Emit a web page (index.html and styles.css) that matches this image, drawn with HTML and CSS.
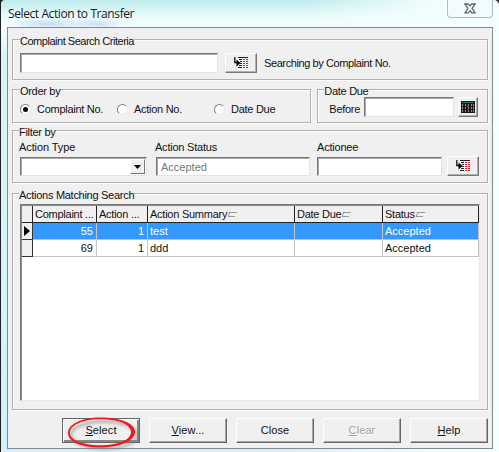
FILE: index.html
```html
<!DOCTYPE html>
<html lang="en">
<head>
<meta charset="utf-8">
<title>Select Action to Transfer</title>
<link rel="stylesheet" href="styles.css">
</head>
<body>
<svg class="defs" width="0" height="0">
  <defs>
    <symbol id="pick" viewBox="0 0 14 12">
      <path d="M4 .5h10M5 2.500h3M6 4.500h2M6 6.500h2M5 8.500h3M4 10.500h4" stroke="#222" stroke-width="1"/>
      <path d="M9 2.500h2M12 2.500h2M9 4.500h2M12 4.500h2M9 6.500h2M12 6.500h2M9 8.500h2M12 8.500h2M9 10.500h2M12 10.500h2" stroke="#e0202a" stroke-width="1.200"/>
      <path d="M.8 0v5.500H3" fill="none" stroke="#111" stroke-width="1.300"/>
      <path d="M2.500 2.500L6.500 6L2.500 9.500z" fill="#000"/>
    </symbol>
  </defs>
</svg>
<div class="window">
  <header class="titlebar">
    <h1 class="title">Select Action to Transfer</h1>
    <button class="close" aria-label="Close">
      <svg width="12" height="11" viewBox="0 0 12 11"><path d="M1 1h3.300L6 2.900L7.700 1H11L8.100 5.300L11 9.800H7.700L6 7.700L4.300 9.800H1L3.900 5.300z" fill="#fff" stroke="#5d6070" stroke-width="1.300"/></svg>
    </button>
  </header>
  <main class="client">
    <section class="group search">
      <h2 class="legend">Complaint Search Criteria</h2>
      <div class="search-row">
        <div class="field search-field"></div>
        <button class="tool"><svg width="14" height="12"><use href="#pick"/></svg></button>
        <span class="hint">Searching by Complaint No.</span>
      </div>
    </section>
    <div class="pair">
      <section class="group order">
        <h2 class="legend">Order by</h2>
        <div class="radios">
          <label class="option complaint"><i class="radio on"></i><span>Complaint No.</span></label>
          <label class="option action"><i class="radio"></i><span>Action No.</span></label>
          <label class="option"><i class="radio"></i><span>Date Due</span></label>
        </div>
      </section>
      <section class="group due">
        <h2 class="legend">Date Due</h2>
        <div class="due-row">
          <span class="before">Before</span>
          <div class="field due-field"></div>
          <button class="tool calendar">
            <svg width="14" height="12" viewBox="0 0 14 12"><path d="M0 0h14v12H0z" fill="#161616"/><path d="M1 1.500h12" stroke="#2b7476"/><path d="M1.500 3v8M4.500 3v8M7.500 3v8M10.500 3v8M12.500 3v8" stroke="#929292" stroke-dasharray="2 1"/><path d="M6 4h2v2H6z" fill="#c82030"/></svg>
          </button>
        </div>
      </section>
    </div>
    <section class="group filter">
      <h2 class="legend">Filter by</h2>
      <div class="filters">
        <div class="col type"><span class="t-type">Action Type</span><div class="field"><button class="drop"><svg width="7" height="4"><path d="M0 0h7L3.500 4z" fill="#000"/></svg></button></div></div>
        <div class="col status"><span class="t-status">Action Status</span><div class="field disabled">Accepted</div></div>
        <div class="col actionee"><span class="t-actionee">Actionee</span><div class="field"></div></div>
        <button class="tool"><svg width="14" height="12"><use href="#pick"/></svg></button>
      </div>
    </section>
    <section class="group results">
      <h2 class="legend">Actions Matching Search</h2>
      <div class="grid">
        <div class="row head">
          <div></div><div>Complaint ...</div><div>Action ...</div>
          <div>Action Summary<svg class="sort" width="9" height="7"><path d="M1 1.500h8M0 5.500h7M2 1L0 6" stroke="#999" fill="none"/></svg></div>
          <div>Date Due<svg class="sort" width="9" height="7"><path d="M1 1.500h8M0 5.500h7M2 1L0 6" stroke="#999" fill="none"/></svg></div>
          <div>Status<svg class="sort" width="9" height="7"><path d="M1 1.500h8M0 5.500h7M2 1L0 6" stroke="#999" fill="none"/></svg></div>
        </div>
        <div class="row selected">
          <div class="marker"><svg width="6" height="10"><path d="M0 0L6 5L0 10z" fill="#000"/></svg></div><div class="num">55</div><div class="num">1</div><div>test</div><div></div><div>Accepted</div>
        </div>
        <div class="row">
          <div class="marker"></div><div class="num">69</div><div class="num">1</div><div>ddd</div><div></div><div>Accepted</div>
        </div>
      </div>
    </section>
    <footer class="actions">
      <button class="btn default"><span><u>S</u>elect</span>
        <svg class="ring" width="78" height="40" viewBox="0 0 78 40">
          <defs><filter id="soft" x="-20%" y="-30%" width="140%" height="160%"><feGaussianBlur stdDeviation="1.4"/></filter></defs>
          <ellipse cx="40" cy="21" rx="33" ry="13.5" fill="none" stroke="#777" stroke-opacity=".5" stroke-width="3" filter="url(#soft)"/>
          <path fill-rule="evenodd" fill="#f01818" d="M4 19C4 10 18 3.500 36 3.500C56 3.500 71 9 71 18C71 27 56 33.500 36 33.500C18 33.500 4 28 4 19zM5.800 19C5.800 26 19 31.300 36 31.300C54 31.300 67 26 67 18C67 10 54 5.200 36 5.200C19 5.200 5.800 11 5.800 19z"/>
        </svg>
      </button>
      <button class="btn"><span><u>V</u>iew...</span></button>
      <button class="btn"><span>Close</span></button>
      <button class="btn off"><span><u>C</u>lear</span></button>
      <button class="btn"><span><u>H</u>elp</span></button>
    </footer>
  </main>
</div>
</body>
</html>
```

FILE: styles.css
```css
* { box-sizing: border-box; }
body { margin: 0; width: 499px; height: 452px; overflow: hidden; background: #222; }
.defs { display: block; }
h1, h2 { margin: 0; font-weight: normal; }
button { margin: 0; padding: 0; font: inherit; color: inherit; border-radius: 0; }
svg { display: block; flex: none; }
.window {
  width: 498px; height: 452px; margin-left: 1px; padding: 0 6px 3px 6px;
  border-radius: 4px 5px 0 0;
  background: radial-gradient(ellipse 40px 6px at 48px 24px, #c5dcf1, transparent), radial-gradient(ellipse 28px 6px at 96px 24px, #cce0f2, transparent), linear-gradient(90deg, transparent 60%, #f3feff 88%), linear-gradient(#bdebec, #e9fbfb 16px, #f3feff 27px, #d9f3f8 60px, #d4f1fb);
  font-family: "Liberation Sans", Arial, sans-serif; font-size: 11px; line-height: 13px; color: #111;
}
.titlebar { height: 27px; display: flex; justify-content: space-between; align-items: flex-start; }
.title { margin: 6px 0 0 1px; font: 12px/15px "Open Sans", "Noto Sans", sans-serif; letter-spacing: -.4px; color: #181818; }
.close {
  width: 46px; height: 18px; border: 1px solid #adbdc7; border-top: 0;
  border-radius: 0 0 4px 4px; background: #f2fcfe; display: flex; justify-content: center; padding-top: 3px;
}
.client {
  height: 422px; border: 1px solid #85898c; background: #f0f0f0; padding: 11px 4px 0 4px;
  display: flex; flex-direction: column;
}
.group { border: 1px solid #b1b1b1; box-shadow: 1px 1px 0 #fcfcfc, inset 1px 1px 0 #fcfcfc; padding-left: 7px; }
.legend { width: max-content; height: 13px; margin-top: -5px; background: #f0f0f0; font-size: 11px; line-height: 13px; white-space: nowrap; }
.field { height: 19px; background: #fff; border: 1px solid; border-color: #777 #e4e4e4 #e4e4e4 #777; box-shadow: inset 1px 1px 0 #aaa; }
.tool {
  width: 32px; height: 20px; display: flex; align-items: center; justify-content: center; background: #f0f0f0;
  border: 1px solid; border-color: #fff #777 #777 #fff; box-shadow: inset -1px -1px 0 #b0b0b0;
}
.search { height: 41px; }
.search .legend { letter-spacing: -.48px; }
.search-row { display: flex; align-items: flex-start; margin-top: 5px; }
.search-field { width: 198px; height: 20px; }
.search-row .tool { margin-left: 7px; }
.hint { margin: 4px 0 0 7px; letter-spacing: -.4px; }
.pair { display: flex; gap: 6px; margin-top: 9px; }
.order { width: 300px; height: 34px; }
.order .legend, .due .legend, .filter .legend { letter-spacing: -.3px; }
.radios { display: flex; margin-top: 5px; }
.option { display: flex; align-items: center; gap: 6px; white-space: nowrap; }
.option span { letter-spacing: -.28px; }
.complaint, .action { width: 97px; }
.radio { width: 11px; height: 11px; border-radius: 50%; border: 1px solid; border-color: #808080 #e8e8e8 #e8e8e8 #808080; background: #fff; display: flex; align-items: center; justify-content: center; }
.on::after { content: ""; width: 5px; height: 5px; border-radius: 50%; background: #000; }
.due { width: 171px; height: 34px; padding-left: 6px; }
.due-row { display: flex; margin-top: -1px; }
.before { width: 35px; margin: 6px 0 0 5px; letter-spacing: -.3px; }
.due-field { width: 90px; height: 20px; }
.calendar { width: 20px; margin-left: 4px; }
.filter { height: 53px; margin-top: 7px; }
.filters { display: flex; align-items: flex-end; margin-top: 2px; }
.filter .legend { margin-left: -1px; }
.col .field { margin-top: 3px; }
.type { width: 127px; }
.status { width: 154px; margin-left: 9px; }
.actionee { width: 125px; margin-left: 7px; }
.filters .tool { margin-left: 5px; }
.t-type { margin-left: -1px; letter-spacing: -.1px; }
.t-status { margin-left: -1px; letter-spacing: -.22px; }
.t-actionee { letter-spacing: -.2px; }
.type .field { display: flex; justify-content: flex-end; padding: 1px; }
.drop { width: 15px; background: #f0f0f0; border: 1px solid; border-color: #fff #777 #777 #fff; display: flex; align-items: center; justify-content: center; }
.disabled { color: #777; padding: 3px 4px; line-height: 13px; }
.results { height: 217px; margin-top: 10px; }
.results .legend { margin-left: -1px; letter-spacing: -.28px; }
.grid { width: 460px; height: 197px; margin-top: 2px; border: 1px solid; border-color: #777 #e8e8e8 #e8e8e8 #777; box-shadow: inset 1px 1px 0 #888; padding: 1px 0 0 1px; background: #fff; }
.row { display: grid; grid-template-columns: 11px 64px 51px 147px 88px 96px; height: 17px; }
.row > div { border-right: 1px solid #c4c4c4; border-bottom: 1px solid #c4c4c4; padding: 2px 0 0 2px; white-space: nowrap; line-height: 13px; overflow: hidden; }
.head > div { background: #f0f0f0; border-color: #222; display: flex; letter-spacing: -.25px; }
.head .sort { margin: 3px 0 0 1px; }
.row > .num { text-align: right; padding-right: 3px; }
.row > .marker { background: #f0f0f0; border-color: #333; padding: 3px 0 0 2px; }
.selected > div { background: #3399ff; color: #fff; }
.actions { display: flex; gap: 9px; margin: 8px 0 0 50px; }
.btn {
  position: relative; width: 78px; height: 25px; background: #f0f0f0; border: 1px solid; border-color: #fff #666 #666 #fff;
  box-shadow: inset -1px -1px 0 #a5a5a5; text-align: center; line-height: 21px; letter-spacing: .1px;
}
.default { border-color: #666; box-shadow: inset 1px 1px 0 #fff, inset -2px -2px 0 #888; }
.btn.off { color: #a0a0a0; text-shadow: 1px 1px 0 #fff; }
.ring { position: absolute; left: 1px; top: -5px; }
```
